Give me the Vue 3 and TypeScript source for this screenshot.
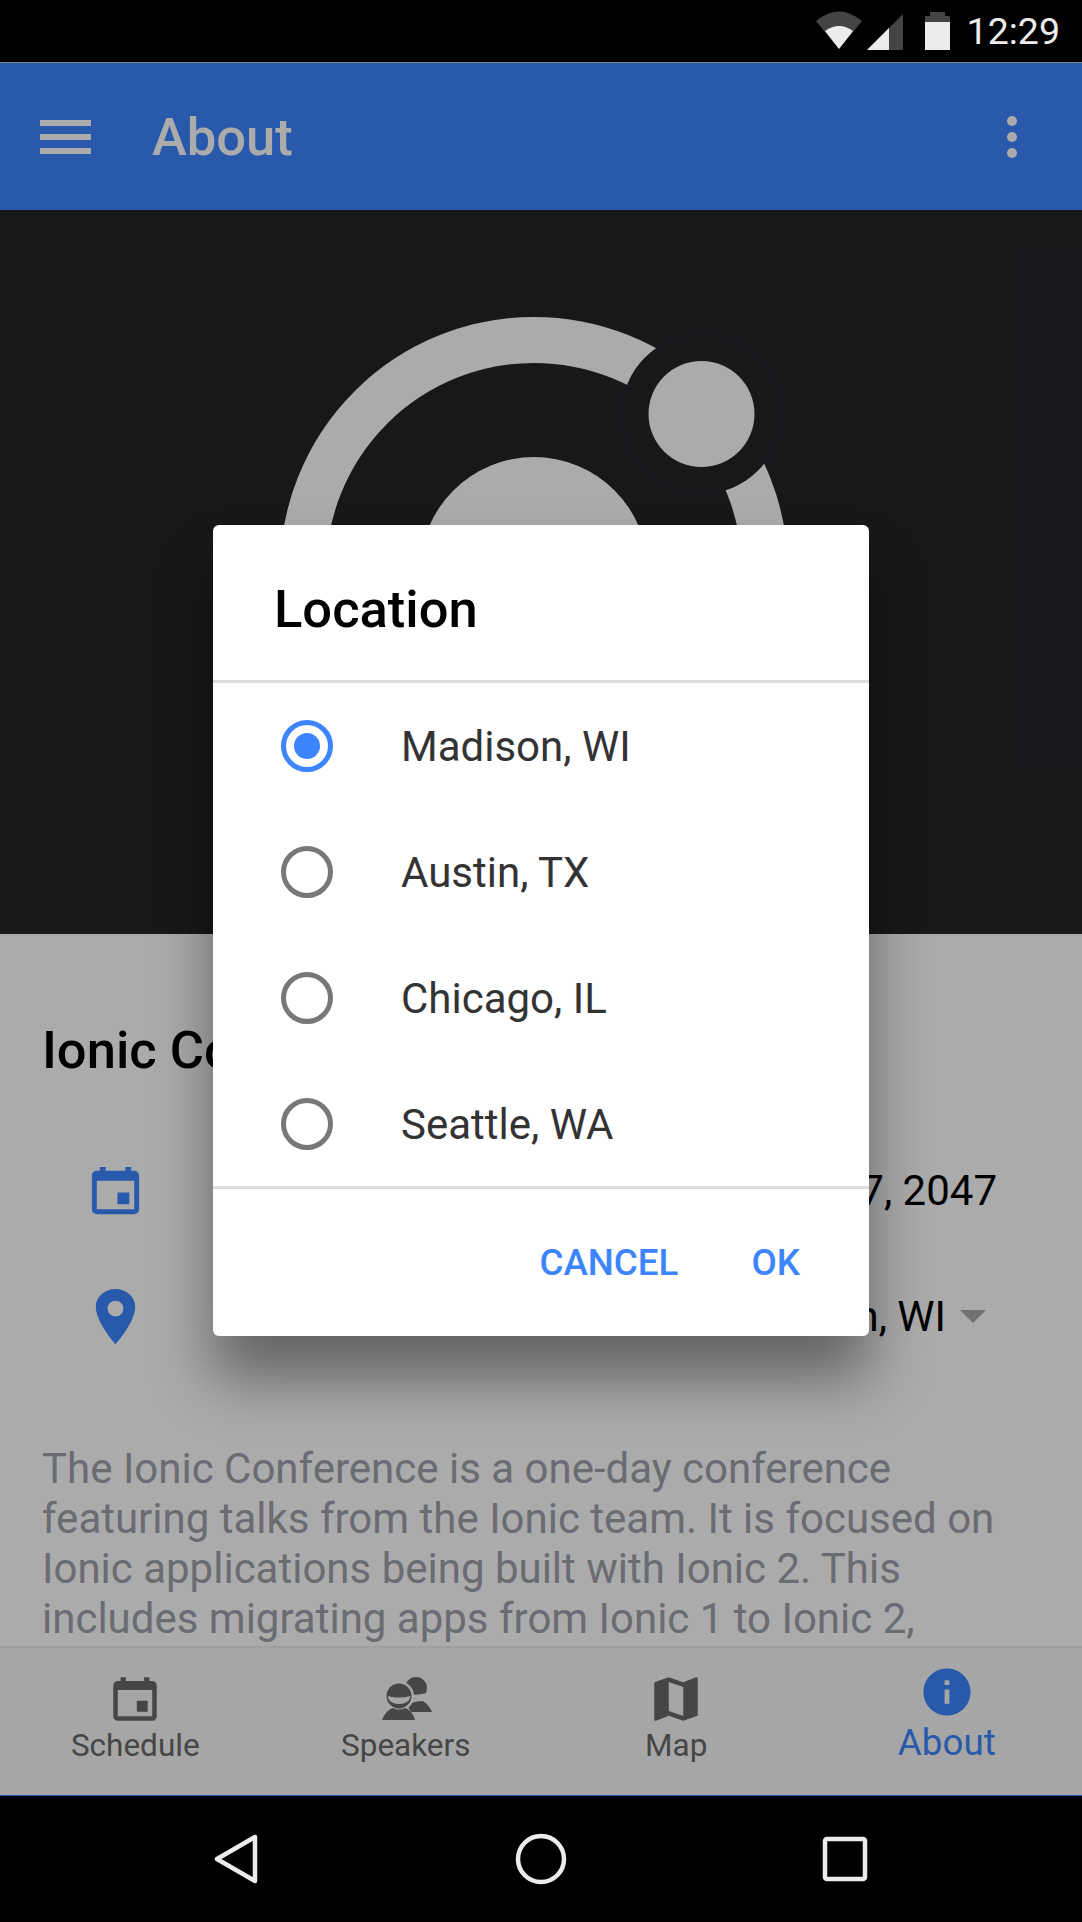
<script setup lang="ts">
import { ref } from 'vue'

const locations = ['Madison, WI', 'Austin, TX', 'Chicago, IL', 'Seattle, WA']
const selected = ref('Madison, WI')

const tabs = [
  { label: 'Schedule', icon: 'calendar' },
  { label: 'Speakers', icon: 'contacts' },
  { label: 'Map', icon: 'map' },
  { label: 'About', icon: 'info' }
]

const calendarPath =
  'M368 272h-96v96h96v-96zm-32-208v32H176V64h-48v32h-24c-22 0-40 18-40 40v272c0 22 18 40 40 40h304c22 0 40-18 40-40V136c0-22-18-40-40-40h-24V64h-48zM408 408H104V176h304v232z'
</script>

<template>
  <div class="device">
    <div class="status-bar">
      <svg class="status-icons" width="150" height="62" viewBox="0 0 150 62">
        <path d="M3 21 Q26 2 49 21 L26 49 Z" fill="#444" />
        <path d="M12 31 Q26 21 40 31 L26 49 Z" fill="#ececec" />
        <path d="M54 50 L90 14 V50 Z" fill="#444" />
        <path d="M54 50 L76 28 V50 Z" fill="#ececec" />
        <path d="M112 16 H117 V12 H132 V16 H137 V22 H112 Z" fill="#444" />
        <rect x="112" y="22" width="25" height="28" fill="#ececec" />
      </svg>
      <span class="clock">12:29</span>
    </div>

    <div class="webview">
      <header class="toolbar">
        <div class="menu-icon"><i></i><i></i><i></i></div>
        <h1 class="toolbar-title">About</h1>
        <div class="more-icon"><i></i><i></i><i></i></div>
      </header>

      <main class="content">
        <div class="hero">
          <svg class="logo" width="1082" height="724" viewBox="0 0 1082 724">
            <circle cx="534" cy="361" r="231" fill="none" stroke="#fff" stroke-width="46" />
            <circle cx="701.5" cy="204" r="80" fill="#222428" />
            <circle cx="701.5" cy="204" r="53" fill="#fff" />
            <circle cx="534" cy="361" r="114" fill="#fff" />
          </svg>
        </div>

        <div class="info">
          <h3 class="conf-title">Ionic Conference</h3>
          <div class="info-row">
            <svg class="row-icon" width="63" height="63" viewBox="0 0 512 512">
              <path :d="calendarPath" fill="#3c85ff" />
            </svg>
            <span class="row-label">Date</span>
            <span class="row-value">May 17, 2047</span>
          </div>
          <div class="info-row">
            <svg class="row-icon" width="63" height="63" viewBox="0 0 512 512">
              <path
                d="M256 32C167.67 32 96 96.51 96 176c0 128 160 304 160 304s160-176 160-304c0-79.49-71.67-144-160-144zm0 224a64 64 0 1 1 64-64 64.07 64.07 0 0 1-64 64z"
                fill="#3c85ff"
              />
            </svg>
            <span class="row-label">Location</span>
            <span class="row-value with-caret">Madison, WI</span>
            <span class="caret"></span>
          </div>
          <p class="blurb">
            The Ionic Conference is a one-day conference featuring talks from the Ionic team. It is
            focused on Ionic applications being built with Ionic 2. This includes migrating apps
            from Ionic 1 to Ionic 2,
          </p>
        </div>
      </main>

      <nav class="tabbar">
        <div
          v-for="tab in tabs"
          :key="tab.label"
          :class="['tab', { active: tab.label === 'About' }]"
        >
          <svg v-if="tab.icon === 'calendar'" width="58" height="58" viewBox="0 0 512 512">
            <path :d="calendarPath" fill="currentColor" />
          </svg>
          <svg v-else-if="tab.icon === 'contacts'" width="58" height="58" viewBox="0 0 58 58">
            <circle cx="39" cy="18" r="11" fill="currentColor" />
            <path d="M33 24 Q40 26 49 23 Q47 29 40 29 Q36 29 33 27 Z" fill="#f8f8f8" />
            <path d="M30 35 Q38 31 46 31 Q52 35 55 42 H34 Z" fill="currentColor" />
            <circle cx="22" cy="26" r="15" fill="#f8f8f8" />
            <circle cx="22" cy="26" r="12.5" fill="currentColor" />
            <path d="M10.5 26 Q22 29 33.5 26 Q32 34 22 34 Q12 34 10.5 26 Z" fill="#f8f8f8" />
            <path d="M5 50 Q9 40 16 38 Q22 41 28 38 Q35 40 38 50 Z" fill="currentColor" />
          </svg>
          <svg v-else-if="tab.icon === 'map'" width="58" height="58" viewBox="0 0 512 512">
            <path
              d="M437 64c-2 0-4 1-9 3L320 109 192 64 71 105c-4 2-7 5-7 10v322c0 6 4 11 11 11 1 0 3-1 5-1l112-43 128 44 121-41c4-2 7-5 7-10V75c0-6-4-11-11-11zM320 405l-128-44V107l128 44v254z"
              fill="currentColor"
            />
          </svg>
          <svg v-else width="58" height="58" viewBox="0 0 512 512">
            <path
              d="M256 48C141 48 48 141 48 256s93 208 208 208 208-93 208-208S371 48 256 48zm21 312h-42V235h42v125zm0-166h-42v-42h42v42z"
              fill="currentColor"
            />
          </svg>
          <span class="tab-label">{{ tab.label }}</span>
        </div>
      </nav>

      <div class="backdrop"></div>

      <div class="dialog">
        <h2 class="dialog-title">Location</h2>
        <div class="radio-list">
          <div v-for="loc in locations" :key="loc" class="radio-row" @click="selected = loc">
            <span :class="['radio', { checked: selected === loc }]"></span>
            <span class="radio-text">{{ loc }}</span>
          </div>
        </div>
        <div class="dialog-actions">
          <button class="dialog-btn">CANCEL</button>
          <button class="dialog-btn">OK</button>
        </div>
      </div>
    </div>

    <div class="nav-bar">
      <svg width="1082" height="126" viewBox="0 0 1082 126">
        <path d="M255 41 V85 L217 63 Z" fill="none" stroke="#ececec" stroke-width="4.5" stroke-linejoin="round" />
        <circle cx="541" cy="63" r="23" fill="none" stroke="#ececec" stroke-width="4.5" />
        <rect x="825" y="43" width="40" height="40" rx="2" fill="none" stroke="#ececec" stroke-width="4.5" />
      </svg>
    </div>
  </div>
</template>

<style scoped>
.device {
  width: 1082px;
  height: 1922px;
  display: flex;
  flex-direction: column;
  overflow: hidden;
  font-family: Roboto, 'Liberation Sans', sans-serif;
  background-color: #000;
}

.status-bar {
  height: 62px;
  flex-shrink: 0;
  display: flex;
  justify-content: flex-end;
  background-color: #000;
  padding-right: 22px;
}

.status-icons {
  margin-right: 4px;
}

.clock {
  color: #ececec;
  font-size: 37.5px;
  line-height: 62px;
}

.webview {
  flex: 1;
  min-height: 0;
  position: relative;
  display: flex;
  flex-direction: column;
  background-color: #fff;
  overflow: hidden;
}

.toolbar {
  height: 148px;
  flex-shrink: 0;
  display: flex;
  align-items: center;
  background-color: #3c85ff;
  border-top: 1px solid #ccc;
  box-sizing: border-box;
  color: #fff;
  padding: 0 40px;
}

.menu-icon {
  width: 51px;
  display: flex;
  flex-direction: column;
  gap: 8px;
}

.menu-icon i {
  height: 6px;
  background-color: #fff;
}

.toolbar-title {
  flex: 1;
  margin: 0 0 0 61px;
  font-size: 52.5px;
  font-weight: 500;
}

.more-icon {
  display: flex;
  flex-direction: column;
  gap: 6px;
  margin-right: 25px;
}

.more-icon i {
  width: 10px;
  height: 10px;
  border-radius: 50%;
  background-color: #fff;
}

.content {
  flex: 1;
  min-height: 0;
  overflow: hidden;
}

.hero {
  height: 724px;
  background-color: #222428;
}

.logo {
  display: block;
}

.info {
  padding: 0 42px;
}

.conf-title {
  margin: 85px 0 46px;
  font-size: 52.5px;
  font-weight: 500;
  line-height: 62px;
  color: #000;
}

.info-row {
  display: flex;
  align-items: center;
  height: 126px;
  font-size: 42px;
  color: #000;
}

.row-icon {
  margin-left: 42px;
}

.row-label {
  margin-left: 90px;
  flex: 1;
}

.row-value {
  margin-right: 43px;
}

.row-value.with-caret {
  margin-right: 14px;
}

.caret {
  width: 0;
  height: 0;
  margin-right: 54px;
  border-left: 13px solid transparent;
  border-right: 13px solid transparent;
  border-top: 13px solid #aaa;
}

.blurb {
  margin: 65px 0 0;
  font-size: 42px;
  line-height: 50px;
  color: #9fa1aa;
}

.tabbar {
  height: 150px;
  flex-shrink: 0;
  display: grid;
  grid-template-columns: repeat(4, 1fr);
  background-color: #f8f8f8;
  border-top: 2px solid #eee;
  border-bottom: 1px solid #3c85ff;
  box-sizing: border-box;
  color: #696969;
}

.tab {
  display: flex;
  flex-direction: column;
  align-items: center;
  padding-top: 22px;
}

.tab svg {
  display: block;
}

.tab-label {
  font-size: 31.5px;
  line-height: 36px;
}

.tab.active {
  color: #3c85ff;
  padding-top: 15px;
}

.tab.active .tab-label {
  font-size: 36.75px;
  line-height: 42px;
  margin-top: 1px;
}

.backdrop {
  position: absolute;
  inset: 0;
  background-color: rgba(0, 0, 0, 0.33);
}

.dialog {
  position: absolute;
  left: 213px;
  top: 463px;
  width: 656px;
  height: 811px;
  display: flex;
  flex-direction: column;
  background-color: #fff;
  border-radius: 6px;
  box-shadow: 0 42px 60px rgba(0, 0, 0, 0.42);
}

.dialog-title {
  height: 158px;
  box-sizing: border-box;
  margin: 0;
  padding: 0 61px;
  font-size: 52.5px;
  font-weight: 500;
  line-height: 168px;
  color: #000;
  border-bottom: 3px solid #ddd;
}

.radio-list {
  height: 506px;
  box-sizing: border-box;
  border-bottom: 3px solid #ddd;
}

.radio-row {
  height: 126px;
  display: flex;
  align-items: center;
  padding-left: 68px;
}

.radio {
  position: relative;
  width: 52px;
  height: 52px;
  box-sizing: border-box;
  border: 5px solid #787878;
  border-radius: 50%;
  flex-shrink: 0;
}

.radio.checked {
  border-color: #3c85ff;
}

.radio.checked::after {
  content: '';
  position: absolute;
  inset: 8px;
  border-radius: 50%;
  background-color: #3c85ff;
}

.radio-text {
  margin-left: 68px;
  font-size: 42px;
  color: #333;
}

.dialog-actions {
  flex: 1;
  display: flex;
  justify-content: flex-end;
  align-items: center;
  padding-right: 69px;
  gap: 73px;
}

.dialog-btn {
  padding: 0;
  border: none;
  background: none;
  font-family: inherit;
  font-size: 36.75px;
  font-weight: 500;
  color: #3c85ff;
}

.nav-bar {
  height: 126px;
  flex-shrink: 0;
  background-color: #000;
}

.nav-bar svg {
  display: block;
}
</style>
